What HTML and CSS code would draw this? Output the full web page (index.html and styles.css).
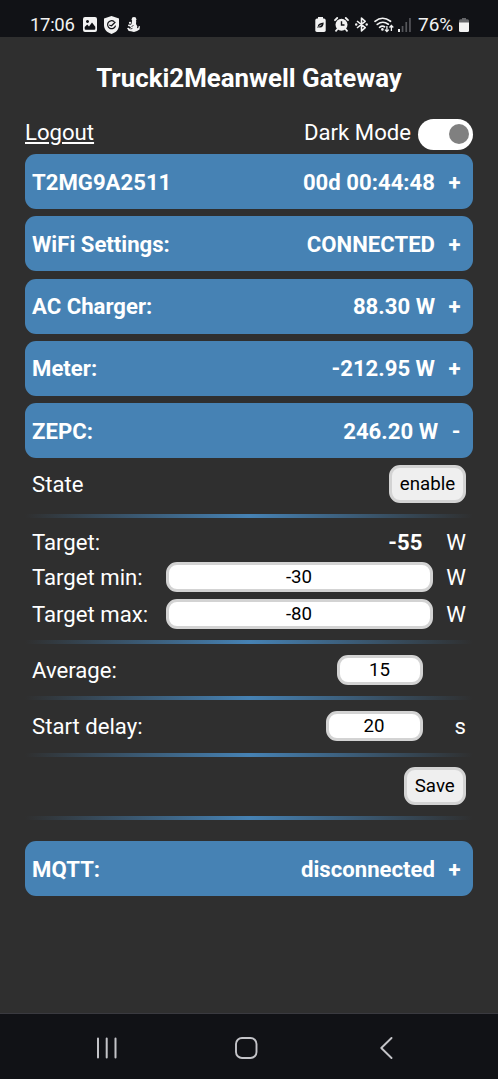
FILE: index.html
```html
<!DOCTYPE html>
<html lang="en">
<head>
<meta charset="utf-8">
<title>Trucki2Meanwell Gateway</title>
<link rel="stylesheet" href="styles.css">
</head>
<body>
<div class="phone">
  <header class="status">
    <span class="clock">17:06</span>
    <svg class="ic-picture" width="14" height="15" viewBox="0 0 14 15"><path fill="#f2f2f2" fill-rule="evenodd" d="M2 0h10a2 2 0 0 1 2 2v11a2 2 0 0 1-2 2H2a2 2 0 0 1-2-2V2a2 2 0 0 1 2-2ZM1.700 10v1.800q0 1 1 1h8.600q1 0 1-1V9.700L9 5.500 6 9.500 4.200 7.600ZM4.500 3a1.500 1.500 0 1 0 .01 0Z"/></svg>
    <svg class="ic-shield" width="15" height="18" viewBox="0 0 15 18"><path fill="#f2f2f2" d="M7.500 0 15 2.500V9c0 4.500-3 7.500-7.500 9C3 16.500 0 13.500 0 9V2.500Z"/><path fill="none" stroke="#111216" stroke-width="1.200" stroke-linecap="round" d="M10 5.500A4 4 0 1 0 11.400 10M5.700 9.200l1.800.6 3.600-3.500"/></svg>
    <svg class="ic-figure" width="13" height="15" viewBox="0 0 13 15"><circle cx="7" cy="2.500" r="2.400" fill="#f2f2f2"/><path fill="#f2f2f2" d="M5 4h4.200L9 7l1.300 2.300-.3 2 1.300-.3.200-1.500L13 9l-.5 3.500-2.500 1.500L7 15l-3-.7-2.300-.3L0 11l1.700-.2.800.9 1.500-.7L3 9.500 1 9l.3-1.500 2.500.3L4.500 7Z"/><circle cx="3" cy="5.800" r="1.100" fill="#f2f2f2"/><path stroke="#111216" stroke-width=".8" d="m4.500 9.500 2-1M3.500 12l2-.7"/></svg>
    <span class="spacer"></span>
    <svg class="ic-saver" width="11" height="15" viewBox="0 0 11 15"><path fill="#f2f2f2" d="M3 0h5v1.500h1A1.700 1.700 0 0 1 10.700 3v10A1.700 1.700 0 0 1 9 15H2A1.700 1.700 0 0 1 .3 13V3A1.700 1.700 0 0 1 2 1.500h1Z"/><path fill="#111216" d="M8.700 5.500C8.500 9.500 7 11 3.700 10.300L2.300 11l.5-1.700C3 7 5 6.300 8.700 5.500Z"/><path stroke="#f2f2f2" stroke-width=".7" d="m3.500 9.500 3-1.700"/></svg>
    <svg class="ic-alarm" width="15" height="15" viewBox="0 0 15 15"><circle cx="7.500" cy="7.700" r="6" fill="#f2f2f2"/><path fill="none" stroke="#f2f2f2" stroke-width="1.800" stroke-linecap="round" d="M1 3.200 3.200 1M14 3.200 11.800 1M3.500 12 2 13.800M11.500 12l1.500 1.800"/><path fill="none" stroke="#111216" stroke-width="1.400" d="M7.500 4.300V8h3"/></svg>
    <svg class="ic-bt" width="13" height="15" viewBox="0 0 13 15"><path fill="none" stroke="#f2f2f2" stroke-width="1.600" stroke-linejoin="round" d="m2 4 8.200 6.700-3.700 3.300V1L10.200 4.300 2 11"/><circle cx="1.200" cy="7.500" r="1.200" fill="#f2f2f2"/><circle cx="11.700" cy="7.500" r="1.200" fill="#f2f2f2"/></svg>
    <svg class="ic-wifi" width="20" height="16" viewBox="0 0 20 16"><g fill="none" stroke="#f2f2f2" stroke-width="1.700" stroke-linecap="round"><path d="M1 4.300Q8.500 -1.800 16.500 4.300M3.300 7.400Q8.700 3.200 14.300 7.200M5.600 10.300Q8.300 8.200 10.500 9.800"/></g><circle cx="8.400" cy="12.400" r="1.300" fill="#f2f2f2"/><path fill="none" stroke="#f2f2f2" stroke-width="1.300" d="M12.900 9v5.500M11 12.600l1.900 2 1.900-2M17.400 14V8.500M15.500 10.500l1.900-2 1.900 2"/></svg>
    <svg class="ic-signal" width="13" height="14" viewBox="0 0 13 14"><rect y="11" width="2" height="3" fill="#f2f2f2"/><path fill="#55565a" d="M3.700 8h1.700v6H3.700ZM7.400 4h1.700v10H7.400ZM11.100 0h1.700v14h-1.700Z"/></svg>
    <span class="percent">76%</span>
    <svg class="ic-battery" width="10" height="14" viewBox="0 0 10 14"><path fill="#66676a" d="M3 0h4v1.200h1.500Q10 1.200 10 2.700V5H0V2.700Q0 1.200 1.500 1.200H3Z"/><path fill="#f2f2f2" d="M0 4.500h10v8q0 1.500-1.500 1.500h-7Q0 14 0 12.500Z"/></svg>
  </header>

  <main class="page">
    <h1 class="title">Trucki2Meanwell Gateway</h1>
    <div class="top">
      <a class="logout">Logout</a>
      <span class="mode">Dark Mode</span>
      <span class="toggle"><span class="knob"></span></span>
    </div>
    <div class="bars">
      <div class="bar"><span>T2MG9A2511</span><span class="value">00d 00:44:48</span><span class="sign">+</span></div>
      <div class="bar"><span>WiFi Settings:</span><span class="value">CONNECTED</span><span class="sign">+</span></div>
      <div class="bar"><span>AC Charger:</span><span class="value">88.30 W</span><span class="sign">+</span></div>
      <div class="bar"><span>Meter:</span><span class="value">-212.95 W</span><span class="sign">+</span></div>
      <div class="bar"><span>ZEPC:</span><span class="value">246.20 W</span><span class="sign minus">-</span></div>
    </div>
    <div class="row state"><span class="label">State</span><button class="btn enable">enable</button></div>
    <div class="rule"></div>
    <div class="targets">
      <div class="row target"><span class="label">Target:</span><b class="number">-55</b><span class="unit">W</span></div>
      <div class="row limit"><span class="label">Target min:</span><input class="field wide" value="-30"><span class="unit">W</span></div>
      <div class="row limit"><span class="label">Target max:</span><input class="field wide" value="-80"><span class="unit">W</span></div>
    </div>
    <div class="rule"></div>
    <div class="row setting"><span class="label">Average:</span><input class="field average" value="15"><span class="unit"></span></div>
    <div class="rule"></div>
    <div class="row setting"><span class="label">Start delay:</span><input class="field delay" value="20"><span class="unit">s</span></div>
    <div class="rule"></div>
    <div class="row saving"><button class="btn save">Save</button></div>
    <div class="rule"></div>
    <div class="bar mqtt"><span>MQTT:</span><span class="value">disconnected</span><span class="sign">+</span></div>
  </main>

  <nav class="nav">
    <svg class="recents" width="22" height="22" viewBox="0 0 22 22"><path stroke="#c4c4c8" stroke-width="2" stroke-linecap="round" d="M2 1.500v19M10.700 1.500v19M19.500 1.500v19"/></svg>
    <svg class="home" width="23" height="22" viewBox="0 0 23 22"><rect x="1" y="1" width="20.500" height="20" rx="6" fill="none" stroke="#c4c4c8" stroke-width="1.900"/></svg>
    <svg class="back" width="13" height="22" viewBox="0 0 13 22"><path fill="none" stroke="#c4c4c8" stroke-width="1.900" stroke-linecap="round" stroke-linejoin="round" d="M11.500 1 1.300 11l10.200 10"/></svg>
  </nav>
</div>
</body>
</html>
```
FILE: styles.css
```css
* { box-sizing: border-box; }
body { margin: 0; background: #2f2f2f; color: #fff; font-family: Roboto, sans-serif; font-size: 22.15px; }
.phone { width: 498px; height: 1079px; display: flex; flex-direction: column; overflow: hidden; }

.status { height: 37px; flex: none; background: #111216; display: flex; align-items: center; padding: 12px 29px 0 30px; color: #f2f2f2; }
.status svg { flex: none; }
.clock { font-size: 18.5px; letter-spacing: -0.3px; width: 53px; }
.spacer { flex: 1; }
.ic-shield { margin-left: 7px; }
.ic-figure { margin-left: 8px; }
.ic-alarm { margin-left: 8px; }
.ic-bt { margin-left: 6px; }
.ic-wifi { margin-left: 6px; }
.ic-signal { margin-left: 4px; }
.percent { font-size: 19px; width: 37px; margin: 0 4px 0 7px; white-space: nowrap; }

.page { flex: 1; padding: 0 25px; display: flex; flex-direction: column; }
.title { margin: 22px 0 0; height: 38px; line-height: 38px; font-size: 25.85px; font-weight: 700; text-align: center; white-space: nowrap; }
.top { height: 31px; margin: 22px 0 4px; display: flex; align-items: center; line-height: 27px; }
.logout { text-decoration: underline; text-decoration-thickness: 2px; text-underline-offset: 2px; margin-right: auto; padding-bottom: 4px; }
.mode { padding-bottom: 4px; margin-right: 7px; }
.toggle { width: 55px; height: 31px; border-radius: 16px; background: #fff; padding: 5px 4px; display: flex; justify-content: flex-end; }
.knob { width: 20px; height: 20px; border-radius: 50%; background: #808080; }

.bars { display: flex; flex-direction: column; gap: 7.3px; }
.bar { height: 55px; flex: none; border-radius: 11px; background: #4682b4; display: flex; align-items: center; padding: 0 7px; font-weight: 700; white-space: nowrap; }
.value { margin-left: auto; }
.sign { width: 31px; padding-right: 5.5px; text-align: right; }
.minus { width: 28px; }

.row { display: flex; align-items: center; padding: 0 7px; white-space: nowrap; }
.label { margin-right: auto; }
.unit { width: 33.5px; text-align: right; }
.state { height: 55.5px; padding-bottom: 4px; }
.rule { height: 4px; flex: none; background: linear-gradient(90deg, #2f2f2f, #4682b4, #2f2f2f); }
.targets { height: 122.5px; padding-top: 5.7px; }
.target { height: 35px; padding-top: 2px; }
.limit { height: 37px; }
.number { margin-right: 10px; }
.setting { height: 52.2px; }
.saving { height: 59.6px; justify-content: flex-end; }
.btn, .field { margin: 0; border: 3px solid #d3d3d3; border-radius: 11px; font-family: inherit; font-size: 18.7px; color: #000; text-align: center; padding: 0; outline: none; }
.btn { height: 38px; background: #efefef; }
.enable { width: 77px; }
.save { width: 62.5px; }
.field { height: 30px; background: #fff; }
.wide { width: 267px; }
.average { width: 86px; margin-right: 10px; }
.delay { width: 97px; margin-right: 10px; }
.mqtt { margin-top: 21px; }

.nav { height: 66px; flex: none; background: #111216; border-top: 1px solid #3a3a40; display: flex; align-items: center; padding: 3px 105px 0 96px; }
.home { margin-left: 117px; }
.back { margin-left: auto; }
```
